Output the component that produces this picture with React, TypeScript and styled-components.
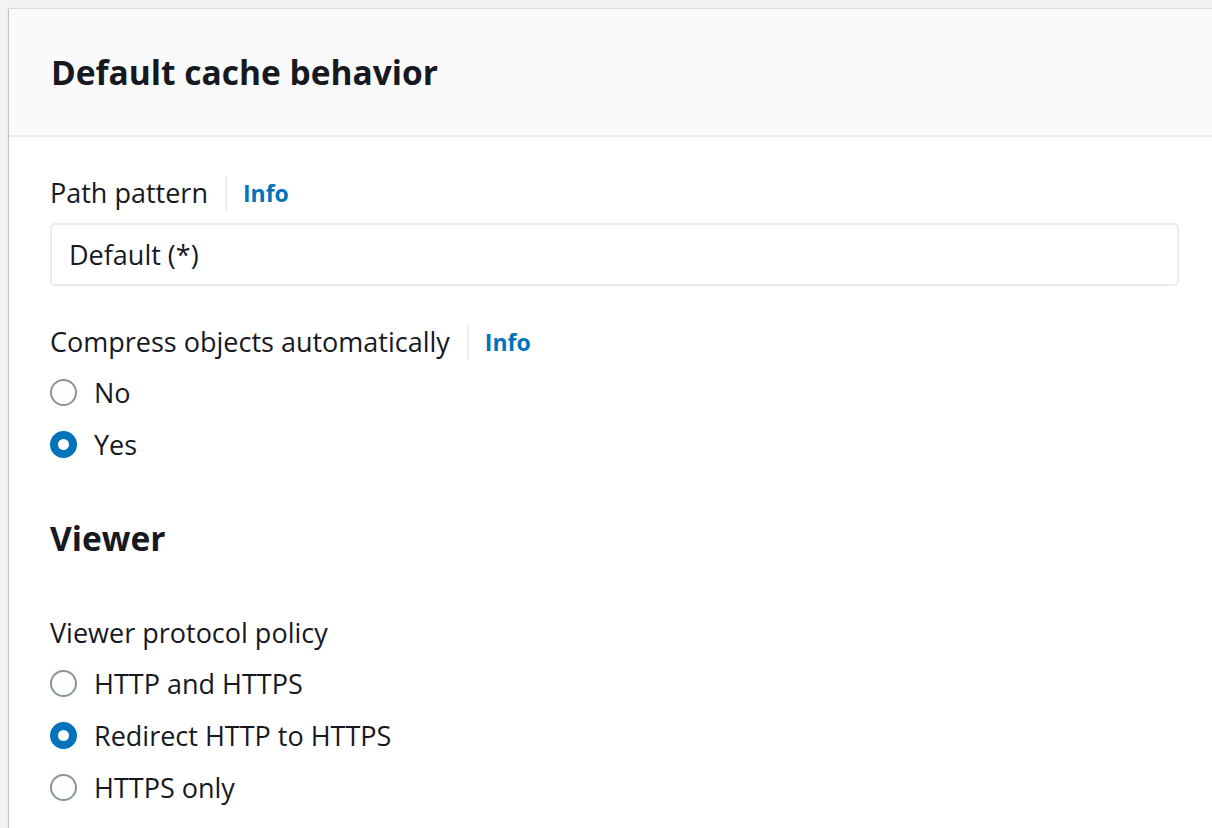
import React from "react";
import styled, { createGlobalStyle } from "styled-components";

const Global = createGlobalStyle`
  html, body { margin: 0; padding: 0; background: #f2f3f3; overflow: hidden; }
  body { font-family: "Open Sans", "Noto Sans", Arial, sans-serif; color: #16191f; }
`;

const Page = styled.div`
  padding: 9px 0 0 9px;
  height: 828px;
  box-sizing: border-box;
`;

const Panel = styled.section`
  background: #ffffff;
  margin-right: -12px;
  height: 100%;
  box-shadow: -1px 0 1px rgba(0, 27, 42, 0.2), 0 -1px 1px rgba(0, 27, 42, 0.08);
`;

const Header = styled.header`
  background: #fafafa;
  height: 128px;
  box-sizing: border-box;
  border-bottom: 2px solid #eaeded;
  display: flex;
  align-items: center;
  padding: 0 42px;
`;

const Title = styled.h2`
  margin: 0;
  font-size: 33.5px;
  font-weight: 700;
  line-height: 40px;
`;

const Body = styled.div`
  padding: 36px 0 0 41px;
  width: 1170px;
  box-sizing: border-box;
`;

const Field = styled.div<{ $gap?: number }>`
  display: flex;
  flex-direction: column;
  margin-bottom: ${(p) => p.$gap ?? 0}px;
`;

const LabelRow = styled.div<{ $mb?: number }>`
  display: flex;
  align-items: center;
  height: 40px;
  margin-bottom: ${(p) => p.$mb ?? 0}px;
`;

const Label = styled.span`
  font-size: 27px;
  line-height: 40px;
`;

const Divider = styled.span`
  width: 2px;
  height: 35px;
  background: #eaeded;
  margin: 0 16px 0 17px;
`;

const InfoLink = styled.a`
  font-size: 23px;
  font-weight: 700;
  color: #0073bb;
  text-decoration: none;
`;

const Input = styled.div`
  height: 63px;
  box-sizing: border-box;
  border: 2px solid #eaeded;
  border-radius: 5px;
  display: flex;
  align-items: center;
  padding: 0 17px;
  font-size: 27px;
`;

const RadioList = styled.div`
  display: flex;
  flex-direction: column;
  margin-top: 4px;
`;

const RadioRow = styled.label`
  display: flex;
  align-items: center;
  height: 52px;
  font-size: 27px;
`;

const RadioCircle = styled.span<{ $checked?: boolean }>`
  width: 27px;
  height: 27px;
  box-sizing: border-box;
  border-radius: 50%;
  margin-right: 17px;
  flex: none;
  border: ${(p) => (p.$checked ? "8.5px solid #0073bb" : "2px solid #879596")};
  background: #fff;
`;

const SectionTitle = styled.h3`
  margin: 0;
  font-size: 33.5px;
  font-weight: 700;
  line-height: 40px;
`;

type Opt = { label: string; checked?: boolean };

const Radios = ({ options }: { options: Opt[] }) => (
  <RadioList>
    {options.map((o) => (
      <RadioRow key={o.label}>
        <RadioCircle $checked={o.checked} />
        {o.label}
      </RadioRow>
    ))}
  </RadioList>
);

export default function App() {
  return (
    <>
      <Global />
      <Page>
        <Panel>
          <Header>
            <Title>Default cache behavior</Title>
          </Header>
          <Body>
            <Field $gap={36}>
              <LabelRow $mb={10}>
                <Label>Path pattern</Label>
                <Divider />
                <InfoLink>Info</InfoLink>
              </LabelRow>
              <Input>Default (*)</Input>
            </Field>
            <Field $gap={48}>
              <LabelRow>
                <Label>Compress objects automatically</Label>
                <Divider />
                <InfoLink>Info</InfoLink>
              </LabelRow>
              <Radios options={[{ label: "No" }, { label: "Yes", checked: true }]} />
            </Field>
            <Field $gap={55}>
              <SectionTitle>Viewer</SectionTitle>
            </Field>
            <Field>
              <LabelRow>
                <Label>Viewer protocol policy</Label>
              </LabelRow>
              <Radios
                options={[
                  { label: "HTTP and HTTPS" },
                  { label: "Redirect HTTP to HTTPS", checked: true },
                  { label: "HTTPS only" },
                ]}
              />
            </Field>
          </Body>
        </Panel>
      </Page>
    </>
  );
}
